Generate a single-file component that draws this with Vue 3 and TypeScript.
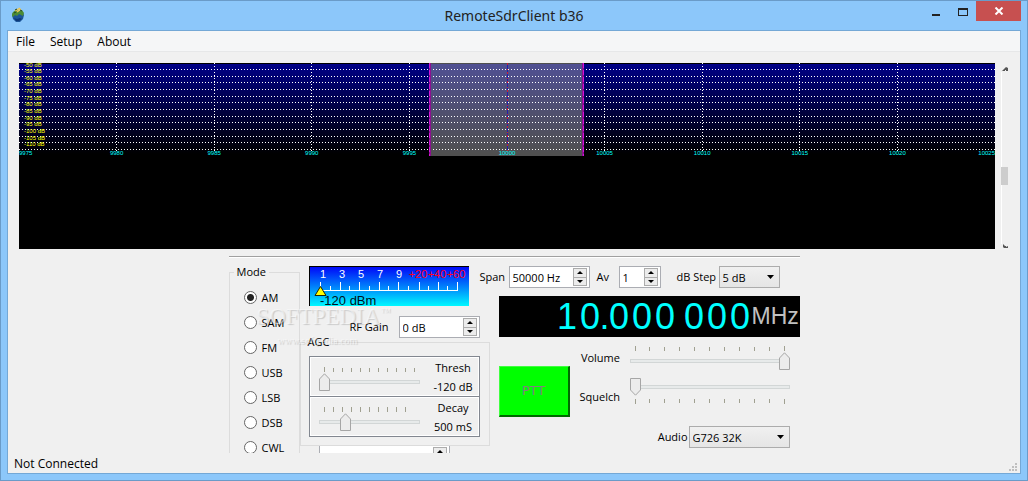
<script setup lang="ts">
import { ref } from 'vue'

const menus = ['File', 'Setup', 'About']
const levels = Array.from({ length: 13 }, (_, i) => -50 - i * 5)
const gridRows = [6, 13, 19, 26, 33, 39, 46, 53, 59, 66, 73, 79, 86]
const freqs = Array.from({ length: 11 }, (_, i) => 9975 + i * 5)
const modes = ['AM', 'SAM', 'FM', 'USB', 'LSB', 'DSB', 'CWL']
const mode = ref('AM')
const span = ref('50000 Hz')
const average = ref('1')
const rfGain = ref('0 dB')
const volume = ref(100)
const squelch = ref(0)
const thresh = ref(0)
const decay = ref(24)
const meterMarks = ['1', '3', '5', '7', '9', '+20', '+40', '+60']
const meterMajor = [11, 31, 50, 70, 89, 110, 129, 148]
const meterMinor = [21, 40, 60, 79, 99, 119, 138]
const digits = '10.000 000'.split('')

function tickSet(count: number, step: number): string[] {
  return Array.from({ length: count }, (_, i) => `${i * step}%`)
}
const fullTicks = tickSet(11, 10)
const decayTicks = tickSet(10, 10)

function anchorFor(i: number): 'start' | 'middle' | 'end' {
  return i === 0 ? 'start' : i === freqs.length - 1 ? 'end' : 'middle'
}
</script>

<template>
  <div class="window">
    <header class="titlebar">
      <div class="side">
        <svg class="app-icon" width="14" height="16" viewBox="0 0 14 16">
          <path d="M2 6 4 4H10L12 6 13 8 12 12 9 15H5L2 12 1 8z" fill="#1c5598" />
          <path d="M1 7 2 5 5 3 8 4 11 3 13 6 12 9 10 8 8 7 6 9 4 8 2 10 1 9z" fill="#4b8b35" />
          <path d="M3 11 6 12 9 11 11 12 8 14 5 14z" fill="#0c3878" />
          <path d="M4 4 9 1M6 5 10 2" stroke="#f0c850" stroke-width="1.4" />
          <path d="M4 3 6 2M9 3 11 4M3 6 5 5" stroke="#26461d" stroke-width="1" />
        </svg>
      </div>
      <h1>RemoteSdrClient b36</h1>
      <div class="side buttons">
        <button type="button" class="winbtn" aria-label="Minimize">
          <svg width="12" height="12"><path d="M2 9h8v2H2z" fill="#222" /></svg>
        </button>
        <button type="button" class="winbtn" aria-label="Maximize">
          <svg width="12" height="12"><path d="M1 3h10v8H1zM2 5v5h8V5z" fill="#222" fill-rule="evenodd" /></svg>
        </button>
        <button type="button" class="close" aria-label="Close">
          <svg width="10" height="8"><path d="M1.500.5 8.500 7.500M8.500.5 1.500 7.500" stroke="#fff" stroke-width="2" /></svg>
        </button>
      </div>
    </header>

    <div class="client">
      <nav class="menubar">
        <button v-for="m in menus" :key="m" type="button">{{ m }}</button>
      </nav>

      <section class="display">
        <div class="plots">
          <svg class="spectrum" width="100%" height="93">
            <defs>
              <linearGradient id="sky" x1="0" y1="0" x2="0" y2="1">
                <stop offset="0" stop-color="#000086" />
                <stop offset="1" stop-color="#000000" />
              </linearGradient>
            </defs>
            <rect width="100%" height="93" fill="#000" />
            <rect y="1" width="100%" height="90" fill="url(#sky)" />
            <g stroke="#fff" stroke-dasharray="1 2" shape-rendering="crispEdges">
              <line v-for="y in gridRows" :key="y" x1="0" x2="100%" :y1="y + 0.5" :y2="y + 0.5" />
              <template v-for="i in 9" :key="i">
                <line v-if="i !== 5" :x1="i * 10 + '%'" :x2="i * 10 + '%'" y1="0" y2="88" />
              </template>
            </g>
            <rect x="42.1%" width="15.7%" y="0" height="93" fill="#a0a0a0" fill-opacity="0.5" />
            <g class="rows">
              <line v-for="y in gridRows" :key="y" x1="42.1%" x2="57.8%" :y1="y + 0.5" :y2="y + 0.5" />
            </g>
            <line x1="50%" x2="50%" y1="0" y2="88" stroke="#2222a8" shape-rendering="crispEdges" />
            <line x1="50%" x2="50%" y1="0" y2="88" stroke="#d01830" stroke-dasharray="2 4 1 2" shape-rendering="crispEdges" />
            <g stroke="#8a108f" stroke-width="2" shape-rendering="crispEdges">
              <line x1="42.1%" x2="42.1%" y1="0" y2="93" />
              <line x1="57.8%" x2="57.8%" y1="0" y2="93" />
            </g>
            <g stroke="#d414d8" stroke-dasharray="5 2" shape-rendering="crispEdges">
              <line x1="42.1%" x2="42.1%" y1="0" y2="93" />
              <line x1="57.8%" x2="57.8%" y1="0" y2="93" />
            </g>
            <g class="levels">
              <text v-for="(l, i) in levels" :key="l" x="5" :y="i === 0 ? 4 : gridRows[i - 1] + 4">{{ l }} dB</text>
            </g>
            <g class="freqs">
              <text v-for="(f, i) in freqs" :key="f" :x="i * 10 + '%'" y="92" :text-anchor="anchorFor(i)">{{ f }}</text>
            </g>
          </svg>
          <div class="waterfall"></div>
        </div>
        <div class="splitter">
          <svg width="6" height="5"><path d="M0 4 4 0 6 1V4H4V3H3V4z" fill="#555" /></svg>
          <div class="rail"><div class="grip"></div></div>
          <svg width="6" height="5"><path d="M1 0 3 2 4 2 4 3 6 2V4H2L1 3z" fill="#555" /></svg>
        </div>
      </section>

      <main class="panel">
        <hr />
        <div class="columns">
          <fieldset class="modes">
            <legend>Mode</legend>
            <label v-for="m in modes" :key="m"><input v-model="mode" type="radio" name="mode" :value="m" />{{ m }}</label>
          </fieldset>

          <div class="middle">
            <svg class="meter" width="160" height="40">
              <defs>
                <linearGradient id="meterfill" x1="0" y1="0" x2="0" y2="1">
                  <stop offset="0" stop-color="#0008f8" />
                  <stop offset="1" stop-color="#00f8ff" />
                </linearGradient>
              </defs>
              <rect width="160" height="40" fill="#000" />
              <rect x="1" y="1" width="159" height="39" fill="url(#meterfill)" />
              <text v-for="(m, i) in meterMarks" :key="m" :x="14 + i * 19" y="12" text-anchor="middle" :fill="i > 4 ? '#ff0020' : '#fff'" font-size="11">{{ m }}</text>
              <g stroke="#fff" shape-rendering="crispEdges">
                <line x1="11" x2="149" y1="24.5" y2="24.5" />
                <line v-for="x in meterMajor" :key="x" :x1="x + 0.5" :x2="x + 0.5" y1="16" y2="24" />
                <line v-for="x in meterMinor" :key="x" :x1="x + 0.5" :x2="x + 0.5" y1="20" y2="24" />
              </g>
              <text x="11" y="39" fill="#001020" font-size="13">-120 dBm</text>
              <path d="M11.500 20.500 17 29.500H6z" fill="#ff0" stroke="#222200" />
            </svg>

            <div class="gain">
              <label for="gain">RF Gain</label>
              <div class="spin w81">
                <input id="gain" v-model="rfGain" type="text" />
                <div class="steps">
                  <button type="button" aria-label="Up"><i class="up"></i></button>
                  <button type="button" aria-label="Down"><i class="down"></i></button>
                </div>
              </div>
            </div>

            <fieldset class="agc">
              <legend>AGC</legend>
              <div class="frame">
                <div class="slider">
                  <svg class="ticks" height="5"><line v-for="(x, i) in fullTicks" :key="x" :x1="x" :x2="x" :y1="i ? 1 : 0" y2="5" /></svg>
                  <input v-model="thresh" type="range" class="point-up" aria-label="Thresh" />
                </div>
                <p><span>Thresh</span><span>-120 dB</span></p>
              </div>
              <div class="frame">
                <div class="slider">
                  <svg class="ticks" height="5"><line v-for="x in decayTicks" :key="x" :x1="x" :x2="x" y1="0" y2="5" /></svg>
                  <input v-model="decay" type="range" class="point-up" aria-label="Decay" />
                </div>
                <p><span>Decay</span><span>500 mS</span></p>
              </div>
            </fieldset>

            <div class="spin lower">
              <input type="text" aria-label="Offset" />
              <div class="steps">
                <button type="button" aria-label="Up"><i class="up"></i></button>
                <button type="button" aria-label="Down"><i class="down"></i></button>
              </div>
            </div>
          </div>

          <div class="right">
            <div class="settings">
              <label for="span">Span</label>
              <div class="spin w81">
                <input id="span" v-model="span" type="text" />
                <div class="steps">
                  <button type="button" aria-label="Up"><i class="up"></i></button>
                  <button type="button" aria-label="Down"><i class="down"></i></button>
                </div>
              </div>
              <label for="av" class="av">Av</label>
              <div class="spin w42">
                <input id="av" v-model="average" type="text" />
                <div class="steps">
                  <button type="button" aria-label="Up"><i class="up"></i></button>
                  <button type="button" aria-label="Down"><i class="down"></i></button>
                </div>
              </div>
              <label for="step" class="step">dB Step</label>
              <select id="step" class="w61"><option>5 dB</option></select>
            </div>

            <div class="frequency">
              <span v-for="(d, i) in digits" :key="i" :class="d >= '0' ? 'digit' : 'gap'">{{ d }}</span>
              <span class="unit">MHz</span>
            </div>

            <div class="audio">
              <button type="button" class="ptt" disabled>PTT</button>
              <label for="volume" class="volume">Volume</label>
              <div class="slider">
                <svg class="ticks" height="5"><line v-for="(x, i) in fullTicks" :key="x" :x1="x" :x2="x" :y1="i % 10 ? 1 : 0" y2="5" /></svg>
                <input id="volume" v-model="volume" type="range" class="point-up" />
              </div>
              <label for="squelch" class="squelch">Squelch</label>
              <div class="slider">
                <input id="squelch" v-model="squelch" type="range" class="point-down" />
                <svg class="ticks" height="5"><line v-for="(x, i) in fullTicks" :key="x" :x1="x" :x2="x" y1="0" :y2="i % 10 ? 4 : 5" /></svg>
              </div>
            </div>

            <div class="codec">
              <label for="codec">Audio</label>
              <select id="codec" class="w101"><option>G726 32K</option></select>
            </div>
          </div>
        </div>
        <div class="watermark" aria-hidden="true">
          <b>SOFTPEDIA<sup>™</sup></b>
          <small>www.softpedia.com</small>
        </div>
      </main>

      <footer class="status">
        <span>Not Connected</span>
        <svg width="8" height="8"><path d="M6 0h2v2H6zM3 3h2v2H3zM6 3h2v2H6zM0 6h2v2H0zM3 6h2v2H3zM6 6h2v2H6z" fill="#bfbfbf" /></svg>
      </footer>
    </div>
  </div>
</template>

<style>
html, body { margin: 0; overflow: hidden; }
</style>

<style scoped>
* { box-sizing: border-box; }
.window {
  height: 100vh;
  display: flex;
  flex-direction: column;
  padding: 0 6px 6px;
  background: #8cc7fa;
  border: 1px solid #6a9bc8;
  font: 11px/14px "Open Sans", "Noto Sans", sans-serif;
  color: #000;
}
button, input, select { font: inherit; color: inherit; margin: 0; padding: 0; border-radius: 0; }
.titlebar { height: 29px; display: flex; flex: none; }
.titlebar h1 { margin: 0; font-family: "Noto Sans", sans-serif; font-size: 14px; line-height: 29px; font-weight: 400; color: #222; }
.side { flex: 1 1 0; padding-left: 4px; }
.app-icon { display: block; margin-top: 6px; }
.buttons { display: flex; justify-content: flex-end; align-items: flex-start; }
.buttons button { border: 0; background: none; display: flex; align-items: center; justify-content: center; height: 20px; }
.buttons .winbtn { width: 27px; }
.buttons .close { width: 45px; background: #c75050; }
.client {
  flex: 1;
  min-height: 0;
  display: flex;
  flex-direction: column;
  background: #f0f0f0;
  border: 1px solid #74a8d6;
}
.menubar { flex: none; height: 21px; display: flex; gap: 15px; padding: 1px 0 0 8px; background: #f5f6f7; border-bottom: 1px solid #e6e7e8; }
.menubar button { border: 0; background: none; font-size: 12px; }
.display { flex: none; display: flex; margin: 11px 12px 0 11px; }
.plots { flex: 1; min-width: 0; background: #000; }
.spectrum { display: block; font-family: "Liberation Sans", Arial, sans-serif; font-size: 6px; }
.rows line { stroke: #fff; stroke-dasharray: 1 2; shape-rendering: crispEdges; }
.levels { fill: #ff0; }
.freqs { fill: #0ff; }
.waterfall { height: 93px; background: #000; }
.splitter { width: 7px; margin-left: 6px; padding: 4px 0 0; display: flex; flex-direction: column; align-items: flex-end; flex: none; }
.rail { width: 100%; flex: 1; border-left: 1px solid #fff; padding-top: 95px; }
.grip { width: 7px; height: 18px; margin-left: -1px; background: #cdcdcd; }

.panel { flex: 1; min-height: 0; width: 571px; margin: 7px auto 0; overflow: hidden; position: relative; }
hr { margin: 0; border: 0; border-top: 1px solid #a0a0a0; border-bottom: 1px solid #fff; }
.columns { display: flex; padding-top: 7px; }
fieldset { margin: 0; min-width: 0; border: 1px solid #dcdcdc; padding: 0; }
legend { padding: 0 3px; margin-left: 4px; line-height: 14px; }
.modes { flex: none; width: 71px; padding-top: 6px; }
.modes label { display: flex; align-items: center; gap: 5px; height: 25px; padding-left: 14px; }
.modes input { appearance: none; width: 13px; height: 13px; border: 1px solid #666; border-radius: 50%; background: #fff; }
.modes input:checked { background: radial-gradient(circle, #222 0 3px, #fff 4px); }

.middle { flex: none; width: 190px; padding-top: 1px; }
.meter { display: block; margin-left: 9px; font-family: "Liberation Sans", Arial, sans-serif; }
.gain { display: flex; justify-content: flex-end; align-items: center; gap: 10px; margin: 10px 10px 0 0; }
.agc { position: relative; margin-top: -3px; padding: 7px 9px 8px 8px; }
.agc legend { margin-left: -4px; }
.frame { height: 41px; display: flex; gap: 8px; padding: 10px 0 0 9px; border: 1px solid #828790; box-shadow: inset 0 0 0 1px #fff; }
.frame + .frame { margin-top: -1px; }
.frame .slider { width: 101px; }
.frame p { flex: 1; margin: -6px 0 0; display: flex; flex-direction: column; gap: 5px; text-align: center; }

.spin { height: 22px; display: flex; background: #fff; border: 1px solid #abadb3; padding: 1px; }
.spin input { flex: 1; min-width: 0; border: 0; background: none; padding: 1px 0 0 2px; outline: 0; }
.steps { width: 14px; display: flex; flex-direction: column; margin-right: 1px; }
.steps button { flex: 1; display: flex; align-items: center; justify-content: center; border: 1px solid #acacac; background: #ececec; }
.steps button + button { margin-top: -1px; }
.up, .down { border: 3px solid transparent; }
.up { border-top: 0; border-bottom-color: #000; }
.down { border-bottom: 0; border-top-color: #000; }
.lower { width: 131px; margin: -1px 0 0 19px; }
.w81 { width: 81px; }
.w61 { width: 61px; }
.w42 { width: 42px; }
.w101 { width: 101px; }
select {
  appearance: none;
  height: 22px;
  padding: 1px 0 0 3px;
  border: 1px solid #acacac;
  background: url("data:image/svg+xml,%3Csvg xmlns='http://www.w3.org/2000/svg' width='7' height='4'%3E%3Cpath d='M0 0h7L3.500 4z'/%3E%3C/svg%3E") no-repeat right 5px center, linear-gradient(#f0f0f0, #e5e5e5);
}

.right { flex: 1; min-width: 0; margin-left: 9px; padding-top: 1px; }
.settings { display: flex; align-items: center; margin-left: -19px; }
.settings label:first-child { width: 29px; }
.settings .av { width: 29px; padding-left: 7px; }
.settings .step { width: 58px; padding-left: 16px; }
.frequency { display: flex; justify-content: flex-end; height: 41px; margin-top: 8px; background: #000; color: #0ff; font: 36px/41px "Liberation Sans", Arial, sans-serif; overflow: hidden; }
.digit { width: 23px; text-align: center; }
.gap { width: 6px; display: flex; justify-content: center; white-space: pre; }
.unit { width: 48px; font-size: 23px; line-height: 40px; color: #c0c0c0; }
.audio { display: grid; grid-template-columns: 71px 1fr 160px; grid-template-rows: 26px 26px; row-gap: 7px; column-gap: 10px; margin: 8px 11px 0 0; }
.ptt { grid-row: 1 / 3; height: 51px; margin-top: 21px; border: 1px solid #40ff40; border-right: 2px solid #006a00; border-bottom: 2px solid #006a00; background: #0f0; color: #808080; font: 13px/16px "DejaVu Sans", sans-serif; }
.volume, .squelch { text-align: right; align-self: center; white-space: nowrap; justify-self: end; }
.squelch { align-self: end; }
.codec { display: flex; align-items: center; justify-content: flex-end; gap: 1px; margin: 22px 10px 0 0; }

.slider { display: flex; flex-direction: column; gap: 1px; }
.audio .slider { padding-top: 1px; }
.audio .slider:last-child { padding-top: 0; gap: 3px; }
.ticks { display: block; flex: none; margin: 0 5px; width: calc(100% - 11px); overflow: visible; }
.ticks line { stroke: #a0a090; shape-rendering: crispEdges; }
input[type="range"] { appearance: none; width: 100%; height: 18px; background: none; display: block; }
input[type="range"]::-webkit-slider-runnable-track { height: 18px; background: linear-gradient(#e7eaea, #e7eaea) center / calc(100% - 2px) 2px no-repeat, linear-gradient(#d2d6d6, #d2d6d6) center / 100% 4px no-repeat; }
input[type="range"]::-webkit-slider-thumb { appearance: none; width: 11px; height: 18px; border: 0; border-radius: 0; }
.point-up::-webkit-slider-thumb { background: url("data:image/svg+xml,%3Csvg xmlns='http://www.w3.org/2000/svg' width='11' height='18'%3E%3Cpath d='M.5 17.500V6L5.500.8 10.500 6V17.500z' fill='%23ececec' stroke='%23a6a6a6'/%3E%3C/svg%3E"); }
.point-down::-webkit-slider-thumb { background: url("data:image/svg+xml,%3Csvg xmlns='http://www.w3.org/2000/svg' width='11' height='18'%3E%3Cpath d='M.5.5V12L5.500 17.200 10.500 12V.5z' fill='%23ececec' stroke='%23a6a6a6'/%3E%3C/svg%3E"); }

.watermark { position: absolute; left: 28px; top: 48px; width: 150px; pointer-events: none; font-family: "Liberation Serif", serif; color: rgba(255, 255, 255, 0.5); text-shadow: 1px 1px 1px rgba(0, 0, 0, 0.16); }
.watermark b { display: block; font-weight: 400; font-size: 23px; line-height: 26px; white-space: nowrap; }
.watermark sup { font-size: 10px; line-height: 10px; }
.watermark small { display: block; margin: 4px 0 0 21px; font-size: 10px; line-height: 14px; }

.status { flex: none; height: 20px; display: flex; justify-content: space-between; padding: 3px 3px 0 6px; font-size: 12px; line-height: 16px; }
.status svg { margin-top: 7px; }
</style>
